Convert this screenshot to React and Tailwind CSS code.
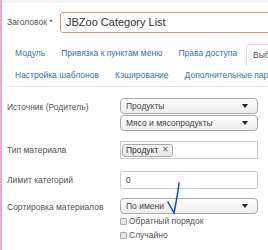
function Caret() {
  return (
    <svg width="6" height="4" viewBox="0 0 6 4" className="shrink-0">
      <path d="M0 0 L6 0 L3 4 Z" fill="#222" />
    </svg>
  );
}

function Select({ value, className = "" }) {
  return (
    <div
      className={`flex items-center justify-between h-[16px] w-[138px] pl-[5px] pr-[9px] border border-[#aaa] rounded-[4px] bg-gradient-to-b from-white to-[#eee] text-[8.5px] text-[#444] ${className}`}
    >
      <span className="leading-none">{value}</span>
      <Caret />
    </div>
  );
}

function Label({ children, className = "" }) {
  return (
    <div className={`w-[118px] shrink-0 pl-[5px] text-[8.5px] text-[#555] leading-[16px] whitespace-nowrap ${className}`}>
      {children}
    </div>
  );
}

function Check({ label, className = "" }) {
  return (
    <div className={`flex items-center h-[12px] ${className}`}>
      <span className="w-[7px] h-[7px] border border-[#aaa] rounded-[1px] bg-[#e8e8e8] mr-[2px]" />
      <span className="text-[8.5px] text-[#555] leading-none">{label}</span>
    </div>
  );
}

export default function App() {
  const tabs1 = ["Модуль", "Привязка к пунктам меню", "Права доступа"];
  const tabs2 = ["Настройка шаблонов", "Кэширование", "Дополнительные параметры"];

  return (
    <div className="relative w-[268px] h-[250px] overflow-hidden bg-white border-l-2 border-[#f2a7cf] font-['Liberation_Sans',Arial,sans-serif]">
      <div className="h-[3px] bg-[#f4f4f4]" />

      {/* title */}
      <div className="flex items-center mt-[9px]">
        <div className="w-[58px] shrink-0 pl-[5px] text-[8.5px] text-[#555] whitespace-nowrap">Заголовок *</div>
        <div className="h-[21px] w-[260px] shrink-0 flex items-center pl-[5px] border border-[#ee8a8a] rounded-[3px] text-[11px] text-[#333]">
          JBZoo Category List
        </div>
      </div>

      {/* tabs */}
      <div className="mt-[9px] ml-[5px] border-b border-[#e5e5e5] whitespace-nowrap">
        <div className="flex h-[23px] items-center">
          {tabs1.map((t) => (
            <div key={t} className="px-[8px] text-[8.5px] text-[#3b73af]">{t}</div>
          ))}
          <div className="h-[22px] mt-[2px] ml-[1px] px-[6px] flex items-center border border-b-0 border-[#ddd] rounded-t-[4px] text-[8.5px] text-[#555]">
            Выбор параметров
          </div>
        </div>
        <div className="flex h-[21px] items-center">
          {tabs2.map((t) => (
            <div key={t} className="px-[8px] text-[8.5px] text-[#3b73af]">{t}</div>
          ))}
        </div>
      </div>

      {/* form */}
      <div className="mt-[11px]">
        <div className="flex items-start">
          <Label className="mt-[1px]">Источник (Родитель)</Label>
          <div className="flex flex-col gap-[1px]">
            <Select value="Продукты" />
            <Select value="Мясо и мясопродукты" />
          </div>
        </div>

        <div className="flex items-center mt-[10px]">
          <Label>Тип материала</Label>
          <div className="h-[18px] w-[138px] flex items-center pl-[1px] border border-[#ccc]">
            <span className="flex items-center h-[13px] px-[3px] border border-[#aaa] rounded-[3px] bg-gradient-to-b from-[#f6f6f6] to-[#e6e6e6] text-[8.5px] text-[#333] leading-none">
              Продукт <span className="ml-[4px] text-[#666] text-[8px]">✕</span>
            </span>
          </div>
        </div>

        <div className="flex items-center mt-[12px]">
          <Label>Лимит категорий</Label>
          <div className="h-[18px] w-[138px] flex items-center pl-[5px] border border-[#ccc] rounded-[2px] text-[8.5px] text-[#444]">
            0
          </div>
        </div>

        <div className="flex items-start mt-[9px]">
          <Label className="mt-[1px]">Сортировка материалов</Label>
          <div className="flex flex-col">
            <Select value="По имени" />
            <Check label="Обратный порядок" className="mt-[1px]" />
            <Check label="Случайно" className="mt-[2px]" />
          </div>
        </div>
      </div>

      {/* hand-drawn check mark */}
      <svg className="absolute left-0 top-0 pointer-events-none" width="268" height="250">
        <path
          d="M177 183 C176 193 174 203 172 213 C170 209 168 206 166 202"
          fill="none"
          stroke="#1e3fd8"
          strokeWidth="1.5"
          strokeLinecap="round"
        />
      </svg>
    </div>
  );
}
